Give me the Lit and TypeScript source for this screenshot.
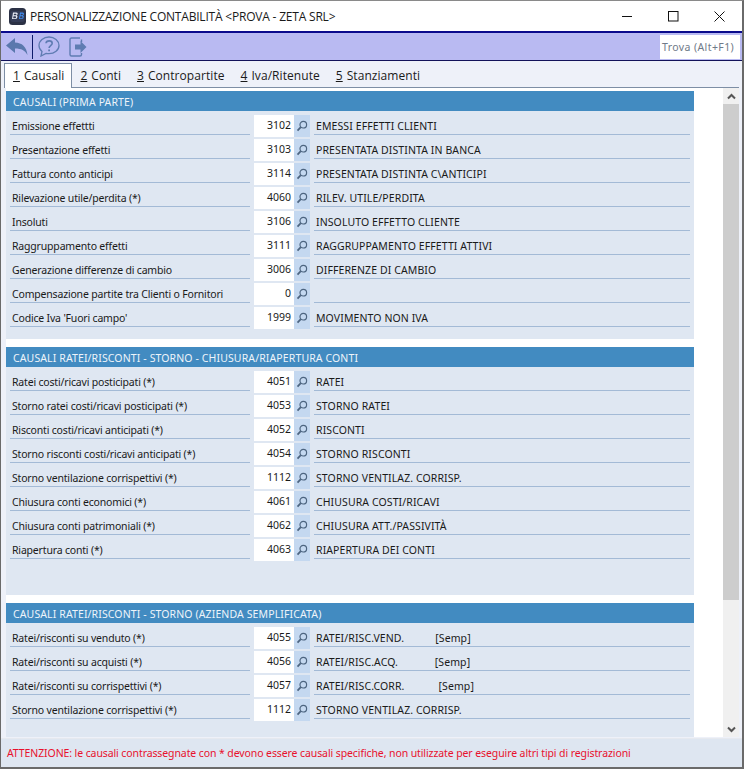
import { LitElement, html, css } from "lit";
import { customElement } from "lit/decorators.js";

type Row = [string, string, string];
const s1: Row[] = [
  ["Emissione effettti", "3102", "EMESSI EFFETTI CLIENTI"],
  ["Presentazione effetti", "3103", "PRESENTATA DISTINTA IN BANCA"],
  ["Fattura conto anticipi", "3114", "PRESENTATA DISTINTA C\\ANTICIPI"],
  ["Rilevazione utile/perdita (*)", "4060", "RILEV. UTILE/PERDITA"],
  ["Insoluti", "3106", "INSOLUTO EFFETTO CLIENTE"],
  ["Raggruppamento effetti", "3111", "RAGGRUPPAMENTO EFFETTI ATTIVI"],
  ["Generazione differenze di cambio", "3006", "DIFFERENZE DI CAMBIO"],
  ["Compensazione partite tra Clienti o Fornitori", "0", ""],
  ["Codice Iva 'Fuori campo'", "1999", "MOVIMENTO NON IVA"],
];
const s2: Row[] = [
  ["Ratei costi/ricavi posticipati (*)", "4051", "RATEI"],
  ["Storno ratei costi/ricavi posticipati (*)", "4053", "STORNO RATEI"],
  ["Risconti costi/ricavi anticipati (*)", "4052", "RISCONTI"],
  ["Storno risconti costi/ricavi anticipati (*)", "4054", "STORNO RISCONTI"],
  ["Storno ventilazione corrispettivi (*)", "1112", "STORNO VENTILAZ. CORRISP."],
  ["Chiusura conti economici (*)", "4061", "CHIUSURA COSTI/RICAVI"],
  ["Chiusura conti patrimoniali (*)", "4062", "CHIUSURA ATT./PASSIVITÀ"],
  ["Riapertura conti (*)", "4063", "RIAPERTURA DEI CONTI"],
];
const s3: Row[] = [
  ["Ratei/risconti su venduto (*)", "4055", "RATEI/RISC.VEND.           [Semp]"],
  ["Ratei/risconti su acquisti (*)", "4056", "RATEI/RISC.ACQ.             [Semp]"],
  ["Ratei/risconti su corrispettivi (*)", "4057", "RATEI/RISC.CORR.            [Semp]"],
  ["Storno ventilazione corrispettivi (*)", "1112", "STORNO VENTILAZ. CORRISP."],
];
const tabs: [string, string][] = [["1", "Causali"], ["2", "Conti"], ["3", "Contropartite"], ["4", "Iva/Ritenute"], ["5", "Stanziamenti"]];

@customElement("app-root")
export class AppRoot extends LitElement {
  static styles = css`
    :host { display: block; width: 744px; height: 769px; font-family: "Noto Sans", sans-serif; color: #1a1a1a; }
    * { box-sizing: border-box; }
    .win { width: 744px; height: 769px; display: flex; flex-direction: column; background: #eef1f9; border: 1px solid #6a6a6a; border-top-color: #8a8a8a; border-width: 1px 2px 2px 1px; overflow: hidden; }
    .title { height: 30px; flex: none; background: #fff; display: flex; align-items: center; padding-left: 8px; font: 12px "Open Sans", sans-serif; color: #1a1a1a; }
    .logo { width: 17px; height: 17px; margin-right: 4px; }
    .ttxt { flex: 1; font-size: 12px; letter-spacing: -0.2px; }
    .wb { width: 46px; height: 30px; display: flex; align-items: center; justify-content: center; flex: none; }
    .toolbar { height: 30px; flex: none; background: #b9baf2; border-top: 2px solid #0a0a8c; border-bottom: 1px solid #12125a; display: flex; align-items: center; padding-left: 5px; }
    .tool { display: block; flex: none; }
    .tool.exit { margin-left: 9px; }
    .sep { width: 1px; height: 24px; background: #0d1b6b; margin: 0 5px 0 4px; flex: none; }
    .find { margin-left: auto; margin-right: 2px; width: 80px; height: 24px; background: #fff; color: #6f7a88; font: 10.5px "Noto Sans", sans-serif; letter-spacing: 0.4px; display: flex; align-items: center; padding-left: 2px; white-space: nowrap; }
    .tabs { height: 26px; flex: none; display: flex; align-items: flex-end; padding-left: 3px; font: 12px "Open Sans", sans-serif; letter-spacing: 0.06px; position: relative; z-index: 1; }
    .tab { height: 23px; padding: 0 8px; display: flex; align-items: center; gap: 4px; white-space: nowrap; }
    .tab u { text-underline-offset: 1px; }
    .tab.on { height: 25px; background: #fff; border: 1px solid #7d8ea5; border-bottom: none; padding: 0 7px 2px 8px; margin-bottom: -1px; }
    .body { height: 650px; flex: none; margin: 0 3px 0 5px; border-top: 1px solid #7d8ea5; background: #fff; display: flex; justify-content: space-between; overflow: hidden; }
    .scroller { width: 688px; padding-top: 3px; display: flex; flex-direction: column; gap: 8px; overflow: hidden; }
    .sec { flex: none; background: #dfe7f2; height: 248px; }
    .h { height: 20px; background: #428bc1; color: #eef4fa; font-size: 10.5px; line-height: 22px; padding-left: 7px; white-space: nowrap; letter-spacing: 0.12px; }
    .rows { padding-top: 4px; display: flex; flex-direction: column; gap: 2px; }
    .row { height: 22px; display: flex; font-size: 10.5px; white-space: nowrap; }
    .lab { width: 240px; margin: 0 4px; border-bottom: 1px solid #a3bad6; padding: 3px 0 0 2px; height: 20px; line-height: 16px; letter-spacing: -0.18px; }
    .num { width: 40px; background: #fff; text-align: right; padding-right: 3px; line-height: 21px; font-size: 10.5px; }
    .btn { width: 16px; background: #c4d8f0; display: flex; align-items: center; justify-content: center; }
    .desc { width: 376px; margin-left: 4px; border-bottom: 1px solid #a3bad6; padding: 3px 0 0 2px; height: 20px; line-height: 16px; white-space: pre; letter-spacing: 0.1px; }
    .sb { width: 16px; background: #f0f0f0; display: flex; flex-direction: column; align-items: center; flex: none; }
    .sbb { height: 16px; flex: none; display: flex; align-items: center; justify-content: center; width: 100%; }
    .thumb { width: 100%; height: 496px; background: #cdcdcd; flex: none; }
    .sp { flex: 1; }
    .foot { flex: 1; background: #dee6f1; color: #e8112d; font: 10.5px "Noto Sans", sans-serif; letter-spacing: -0.1px; display: flex; align-items: center; padding-left: 6px; margin-top: 1px; white-space: nowrap; border-top: 1px solid #e6e9ef; }
  `;

  private row(r: Row) {
    return html`<div class="row"><div class="lab">${r[0]}</div><div class="num">${r[1]}</div>
      <div class="btn"><svg width="12" height="12" viewBox="0 0 12 12" fill="none" stroke="#4d6580"><circle cx="7.300" cy="4.700" r="3.300" stroke-width="1.200"/><path d="M4.800 7.200 1.500 10.600" stroke-width="1.800"/></svg></div>
      <div class="desc">${r[2]}</div></div>`;
  }
  private sec(t: string, rows: Row[]) {
    return html`<div class="sec"><div class="h">${t}</div><div class="rows">${rows.map((r) => this.row(r))}</div></div>`;
  }

  render() {
    return html`<div class="win">
      <div class="title">
        <svg class="logo" viewBox="0 0 17 17"><rect width="17" height="17" rx="3.500" fill="#2b3145"/><rect x="1.500" y="3" width="14" height="11" rx="2" fill="#343c56"/><path d="M4 4.500h3.400q1.600 0 1.300 1.600-.2 1-1.100 1.300 1 .3.900 1.400-.2 2.200-2.200 2.200H3Zm1 1.200-.3 1.500h1.900q.8 0 .9-.8 0-.7-.7-.7Zm-.5 2.600-.4 1.900h1.900q1 0 1.100-1 .1-.9-.9-.9Z" fill="#e8ebf4"/><path d="M11 4.500h2.700q1.500 0 1.300 1.500-.1 1-1 1.400.9.300.8 1.400-.2 2.200-2.100 2.200H10Zm.9 1.200-.3 1.500h1.500q.7 0 .8-.8 0-.7-.6-.7Zm-.5 2.600-.4 1.900h1.500q1 0 1.100-1 .1-.9-.8-.9Z" fill="#3f8cf0"/></svg>
        <span class="ttxt">PERSONALIZZAZIONE CONTABILITÀ &lt;PROVA - ZETA SRL&gt;</span>
        <div class="wb"><svg width="11" height="11" viewBox="0 0 11 11"><path d="M0 5.500h10" stroke="#111" stroke-width="1"/></svg></div>
        <div class="wb"><svg width="11" height="11" viewBox="0 0 11 11" fill="none"><rect x=".5" y=".5" width="9.500" height="9.500" stroke="#111"/></svg></div>
        <div class="wb"><svg width="11" height="11" viewBox="0 0 11 11"><path d="M.5.500 10.500 10.500M10.500.500.500 10.500" stroke="#111"/></svg></div>
      </div>
      <div class="toolbar">
        <svg class="tool" width="22" height="18" viewBox="0 0 22 18"><path d="M0 7.500 9 0v4.500c7 .3 11.500 4 12.500 12.500-2.500-4.500-6-6.500-12.500-6.500V15Z" fill="#5a78ad"/></svg>
        <div class="sep"></div>
        <svg class="tool" width="22" height="21" viewBox="0 0 22 21" fill="none" stroke="#5f7cb2" stroke-width="1.300"><path d="M11 1C5.500 1 1 4.700 1 9.500c0 2.500 1.200 4.500 3 6L3 20l5-2.600c1 .2 2 .3 3 .3 5.500 0 10-3.600 10-8.200S16.500 1 11 1Z"/><path d="M8 7.300c.3-3.300 6.200-3.300 6.200 0 0 2.400-3.100 2.300-3.100 4.700" stroke-width="1.600"/><path d="M11.100 13.500v1.800" stroke-width="1.800"/></svg>
        <svg class="tool exit" width="18" height="20" viewBox="0 0 18 20" fill="none"><path d="M11 1H2.500Q1 1 1 2.500v15Q1 19 2.500 19H11q1.500 0 1.500-1.500V16M12.500 5V2.500" stroke="#5f7cb2" stroke-width="1.400"/><path d="M6 7.500h5.500V4l6 6-6 6v-3.500H6Z" fill="#5f7cb2"/></svg>
        <div class="find">Trova (Alt+F1)</div>
      </div>
      <div class="tabs">
        ${tabs.map((t, i) => html`<div class="tab ${i === 0 ? "on" : ""}"><u>${t[0]}</u><span>${t[1]}</span></div>`)}
      </div>
      <div class="body">
        <div class="scroller">
          ${this.sec("CAUSALI (PRIMA PARTE)", s1)}
          ${this.sec("CAUSALI RATEI/RISCONTI - STORNO - CHIUSURA/RIAPERTURA CONTI", s2)}
          ${this.sec("CAUSALI RATEI/RISCONTI - STORNO (AZIENDA SEMPLIFICATA)", s3)}
        </div>
        <div class="sb">
          <div class="sbb"><svg width="9" height="7" viewBox="0 0 9 7" fill="none"><path d="M1 5.500 4.500 2 8 5.500" stroke="#555" stroke-width="2"/></svg></div>
          <div class="thumb"></div>
          <div class="sp"></div>
          <div class="sbb"><svg width="9" height="7" viewBox="0 0 9 7" fill="none"><path d="M1 1.500 4.500 5 8 1.500" stroke="#555" stroke-width="2"/></svg></div>
        </div>
      </div>
      <div class="foot">ATTENZIONE: le causali contrassegnate con * devono essere causali specifiche, non utilizzate per eseguire altri tipi di registrazioni</div>
    </div>`;
  }
}
